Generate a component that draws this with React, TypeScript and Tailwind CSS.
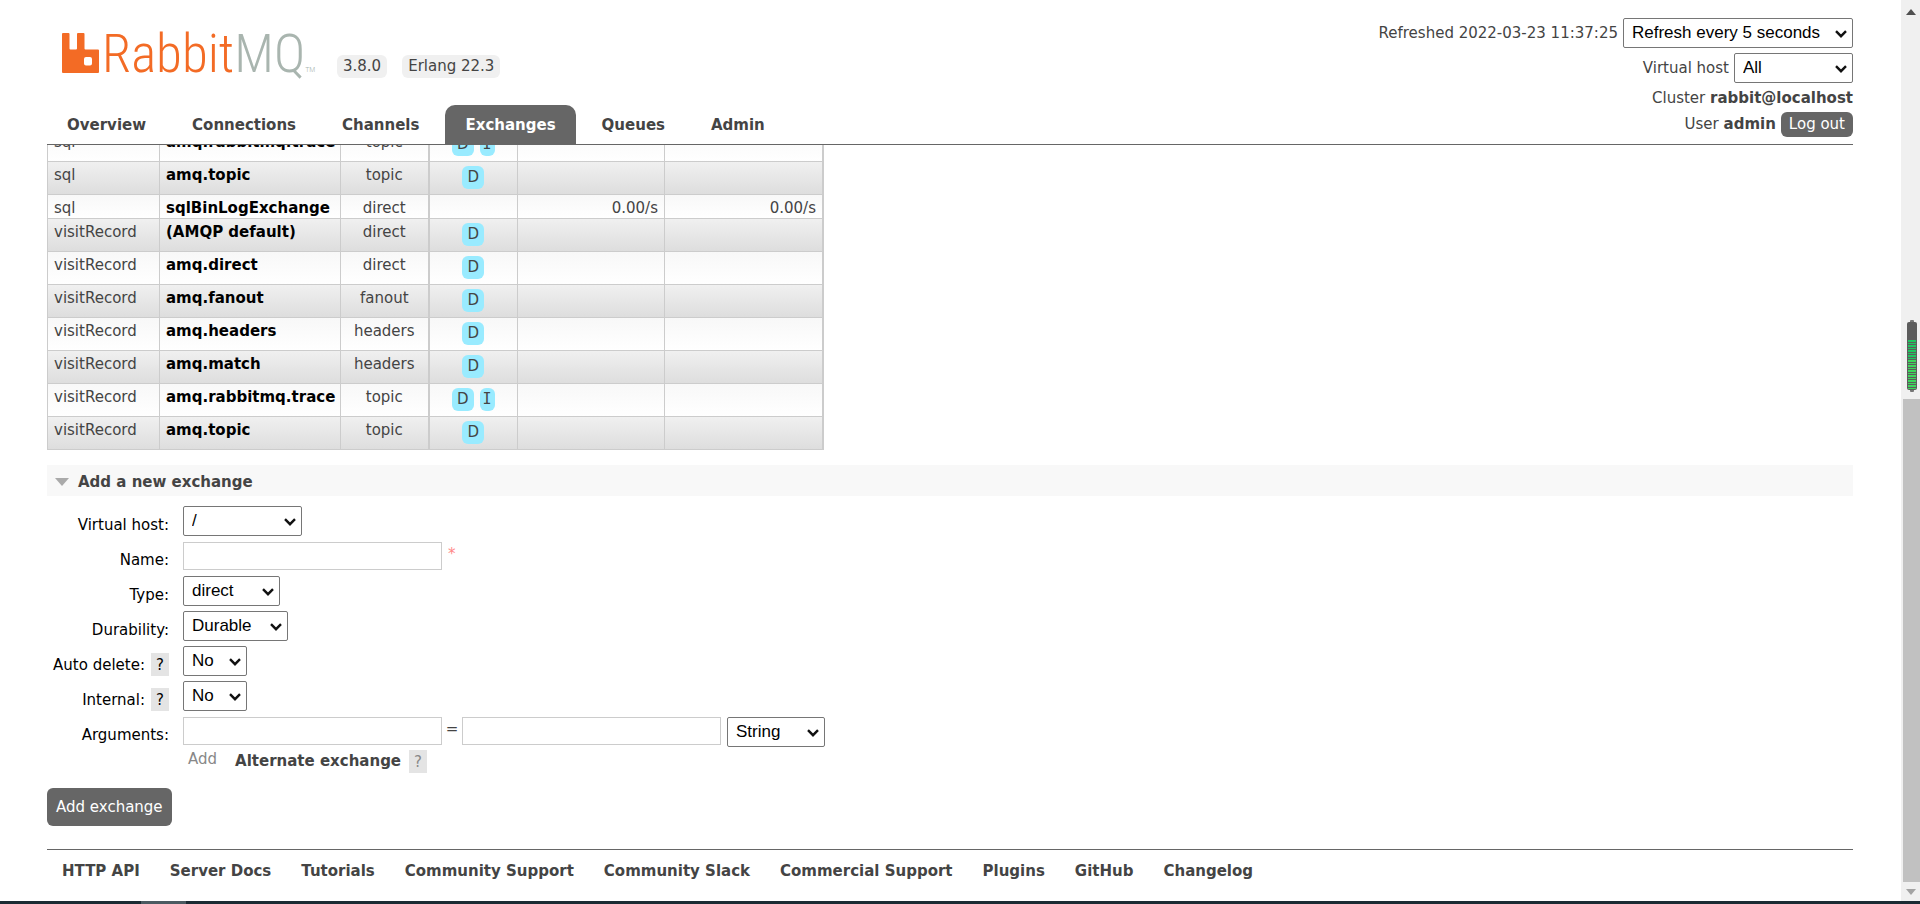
import type { ReactNode } from "react";

type Exchange = {
  vhost: string;
  name: string;
  type: string;
  features: string[];
  rateIn?: string;
  rateOut?: string;
};

const exchanges: Exchange[] = [
  { vhost: "sql", name: "amq.rabbitmq.trace", type: "topic", features: ["D", "I"] },
  { vhost: "sql", name: "amq.topic", type: "topic", features: ["D"] },
  { vhost: "sql", name: "sqlBinLogExchange", type: "direct", features: [], rateIn: "0.00/s", rateOut: "0.00/s" },
  { vhost: "visitRecord", name: "(AMQP default)", type: "direct", features: ["D"] },
  { vhost: "visitRecord", name: "amq.direct", type: "direct", features: ["D"] },
  { vhost: "visitRecord", name: "amq.fanout", type: "fanout", features: ["D"] },
  { vhost: "visitRecord", name: "amq.headers", type: "headers", features: ["D"] },
  { vhost: "visitRecord", name: "amq.match", type: "headers", features: ["D"] },
  { vhost: "visitRecord", name: "amq.rabbitmq.trace", type: "topic", features: ["D", "I"] },
  { vhost: "visitRecord", name: "amq.topic", type: "topic", features: ["D"] },
];

const tabs = ["Overview", "Connections", "Channels", "Exchanges", "Queues", "Admin"];

const footerLinks = [
  "HTTP API",
  "Server Docs",
  "Tutorials",
  "Community Support",
  "Community Slack",
  "Commercial Support",
  "Plugins",
  "GitHub",
  "Changelog",
];

function Select({ id, label, width, options }: { id: string; label?: string; width: string; options: string[] }) {
  return (
    <span className={`relative inline-flex h-[30px] shrink-0 ${width}`}>
      <select
        id={id}
        aria-label={label}
        className="h-full w-full appearance-none rounded-xs border border-[#767676] bg-white pl-2 pr-6 font-['Liberation_Sans',Arial,sans-serif] text-[17px] leading-5 text-black"
      >
        {options.map((o) => (
          <option key={o}>{o}</option>
        ))}
      </select>
      <svg
        viewBox="0 0 12 8"
        className="pointer-events-none absolute right-[6px] top-3 h-2 w-3"
        fill="none"
        stroke="#111"
        strokeWidth="2.4"
      >
        <path d="M1 1.2 6 6.2 11 1.2" />
      </svg>
    </span>
  );
}

function Help({ muted = false }: { muted?: boolean }) {
  return (
    <a
      href="#help"
      className={`flex h-[23px] w-[18px] items-center justify-center bg-[#e4e4e4] ${muted ? "text-[#888]" : "text-black"}`}
    >
      ?
    </a>
  );
}

function Field({ id, label, help, children }: { id: string; label: string; help?: boolean; children: ReactNode }) {
  return (
    <div className="flex h-[35px] items-start gap-[14px]">
      <div className="mt-[7px] flex h-[23px] w-[122px] items-center justify-end gap-[6px] whitespace-nowrap text-black">
        <label htmlFor={id}>{label}:</label>
        {help && <Help />}
      </div>
      {children}
    </div>
  );
}

function Logo() {
  return (
    <a href="#home" aria-label="RabbitMQ" className="flex h-[45px] w-[275px] items-start gap-[3px]">
      <svg viewBox="0 0 37 40" className="h-10 w-[37px] shrink-0" fill="#f36b25">
        <path
          fillRule="evenodd"
          d="M1 0h5.500q1 0 1 1v14.500q0 1 1 1h5.500q1 0 1-1V1q0-1 1-1h5.500q1 0 1 1v14.500q0 1 1 1H36q1 0 1 1V39q0 1-1 1H1q-1 0-1-1V1q0-1 1-1ZM24 24q-2 0-2 2v4.500q0 2 2 2h4q2 0 2-2V26q0-2-2-2Z"
        />
      </svg>
      <span className="flex items-baseline font-['Liberation_Sans_Narrow','Roboto_Condensed','Open_Sans_Condensed',sans-serif] text-[53px] font-light leading-[42px] text-[#f36b25]">
        Rabbit<span className="text-[#a9b5af]">MQ</span>
        <span className="text-[8px] leading-none text-[#a9b5af]">TM</span>
      </span>
    </a>
  );
}

function Header() {
  return (
    <header className="relative z-10 flex items-end justify-between border-b border-[#666] bg-white">
      <div>
        <div className="mb-[27px] flex items-end pl-[15px]">
          <Logo />
          <div className="flex gap-[15px]">
            <span className="rounded-md bg-[#f0f0f0] px-[6px] leading-[23px]">3.8.0</span>
            <span className="rounded-md bg-[#f0f0f0] px-[6px] leading-[23px]">Erlang 22.3</span>
          </div>
        </div>
        <nav>
          <ul className="flex gap-[6px] font-bold">
            {tabs.map((t) => (
              <li key={t}>
                <a
                  href={`#${t.toLowerCase()}`}
                  className={
                    t === "Exchanges"
                      ? "block h-[39px] rounded-t-[10px] bg-[#666] px-5 leading-[41px] text-white"
                      : "block h-[39px] px-5 leading-[41px]"
                  }
                >
                  {t}
                </a>
              </li>
            ))}
          </ul>
        </nav>
      </div>
      <div className="flex flex-col items-end pb-[7px] pt-[18px]">
        <div className="flex items-center gap-[5px]">
          <span>Refreshed 2022-03-23 11:37:25</span>
          <Select id="refresh" label="Refresh interval" width="w-[230px]" options={["Refresh every 5 seconds"]} />
        </div>
        <div className="mt-[5px] flex items-center gap-[5px]">
          <label htmlFor="show-vhost">Virtual host</label>
          <Select id="show-vhost" width="w-[119px]" options={["All"]} />
        </div>
        <p className="pt-px leading-7">
          Cluster <b>rabbit@localhost</b>
        </p>
        <div className="flex items-center gap-[5px] leading-[25px]">
          <span>
            User <b>admin</b>
          </span>
          <button className="rounded-md bg-[#666] px-2 text-white">Log out</button>
        </div>
      </div>
    </header>
  );
}

function ExchangeTable() {
  const cell = "border border-[#ccc] px-[6px] pt-1";
  return (
    <table className="-mt-[17px] w-[777px] table-fixed border-collapse">
      <colgroup>
        <col className="w-[112px]" />
        <col className="w-[181px]" />
        <col className="w-[88px]" />
        <col className="w-[89px]" />
        <col className="w-[147px]" />
        <col />
      </colgroup>
      <tbody className="align-top leading-[18px]">
        {exchanges.map((x, i) => (
          <tr
            key={x.vhost + x.name}
            className={`${i % 2 ? "bg-linear-to-b from-[#f0f0f0] to-[#dddddd]" : "bg-linear-to-b from-[#f8f8f8] to-white"} ${
              x.features.length ? "h-[33px]" : "h-6"
            }`}
          >
            <td className={cell}>{x.vhost}</td>
            <td className={`${cell} whitespace-nowrap font-bold text-black`}>
              <a href={`#${x.name}`}>{x.name}</a>
            </td>
            <td className={`${cell} border-r-2 text-center`}>{x.type}</td>
            <td className={cell}>
              <div className="flex justify-center gap-[6px]">
                {x.features.map((f) => (
                  <abbr
                    key={f}
                    className={`h-[23px] rounded-md bg-[#99ebff] leading-[23px] no-underline ${
                      f === "I" ? "px-[3px] font-['DejaVu_Sans_Mono',monospace]" : "px-[5px]"
                    }`}
                  >
                    {f}
                  </abbr>
                ))}
              </div>
            </td>
            <td className={`${cell} text-right`}>{x.rateIn}</td>
            <td className={`${cell} border-r-2 text-right`}>{x.rateOut}</td>
          </tr>
        ))}
      </tbody>
    </table>
  );
}

function AddExchange() {
  const input = "h-7 w-[259px] border border-[#ccc] bg-white px-1";
  return (
    <section>
      <h2 className="mt-[15px] flex h-[31px] items-center gap-[9px] bg-[#f8f8f8] pl-2 pt-[2px] font-bold">
        <svg viewBox="0 0 14 8" className="h-2 w-[14px]" fill="#aaa">
          <path d="M0 0h14L7 8Z" />
        </svg>
        Add a new exchange
      </h2>
      <form className="pt-[10px]" onSubmit={(e) => e.preventDefault()}>
        <Field id="vhost" label="Virtual host">
          <Select id="vhost" width="w-[119px]" options={["/"]} />
        </Field>
        <Field id="name" label="Name">
          <div className="flex gap-[6px] pt-px">
            <input id="name" type="text" className={input} />
            <span className="leading-6 text-[#ff8888]">*</span>
          </div>
        </Field>
        <Field id="type" label="Type">
          <Select id="type" width="w-[97px]" options={["direct"]} />
        </Field>
        <Field id="durable" label="Durability">
          <Select id="durable" width="w-[105px]" options={["Durable"]} />
        </Field>
        <Field id="auto-delete" label="Auto delete" help>
          <Select id="auto-delete" width="w-[64px]" options={["No"]} />
        </Field>
        <Field id="internal" label="Internal" help>
          <Select id="internal" width="w-[64px]" options={["No"]} />
        </Field>
        <Field id="arguments" label="Arguments">
          <div className="flex pt-px">
            <input id="arguments" type="text" className={input} />
            <span className="w-5 text-center leading-6">=</span>
            <input type="text" aria-label="Argument value" className={input} />
            <span className="ml-[6px] flex">
              <Select id="argument-type" label="Argument type" width="w-[98px]" options={["String"]} />
            </span>
          </div>
        </Field>
        <div className="-mt-px flex h-[23px] pl-[141px]">
          <span className="leading-[18px] text-[#888]">Add</span>
          <a href="#alternate" className="ml-[18px] mr-2 font-bold leading-[23px]">
            Alternate exchange
          </a>
          <Help muted />
        </div>
        <button type="submit" className="mt-[15px] block h-[38px] rounded-md bg-[#666] px-[9px] text-white">
          Add exchange
        </button>
      </form>
    </section>
  );
}

function ScrollRail() {
  return (
    <aside className="flex w-[19px] shrink-0 flex-col items-center bg-[#f0f0f0]">
      <svg viewBox="0 0 10 6" className="mt-[9px] h-[6px] w-[10px]" fill="#505050">
        <path d="M5 0l5 6H0Z" />
      </svg>
      <svg viewBox="0 0 10 72" className="ml-[3px] mt-[305px] h-[72px] w-[10px]">
        <rect x="3" width="4" height="72" rx="1" fill="#777" />
        <rect y="2" width="10" height="68" rx="2" fill="#5c5c5c" />
        {Array.from({ length: 10 }, (_, i) => (
          <g key={i} fill={i < 4 ? "#1fc55e" : "#3dd65c"}>
            <rect x="1" y={20 + i * 5} width="8" height="2" />
            <rect x="1" y={23 + i * 5} width="8" height="1" />
          </g>
        ))}
      </svg>
      <div className="ml-[2px] mt-[7px] w-[17px] flex-1 bg-[#c1c1c1]" />
      <svg viewBox="0 0 10 6" className="mb-[6px] mt-[7px] h-[6px] w-[10px]" fill="#a3a3a3">
        <path d="M0 0h10L5 6Z" />
      </svg>
    </aside>
  );
}

export default function App() {
  return (
    <div className="flex min-h-screen flex-col bg-white font-['DejaVu_Sans',Verdana,sans-serif] text-[15px] leading-[18px] text-[#444]">
      <div className="flex flex-1">
        <div className="min-w-0 flex-1 pl-[47px] pr-12">
          <Header />
          <main>
            <ExchangeTable />
            <AddExchange />
          </main>
          <footer className="mt-[23px] border-t border-[#666] pl-[15px] pt-3">
            <ul className="flex gap-[30px] font-bold">
              {footerLinks.map((l) => (
                <li key={l}>
                  <a href="#docs">{l}</a>
                </li>
              ))}
            </ul>
          </footer>
        </div>
        <ScrollRail />
      </div>
      <div className="flex h-[3px] bg-[#1b2b33] pl-[141px]">
        <div className="w-[45px] bg-[#4b5a61]" />
      </div>
    </div>
  );
}
